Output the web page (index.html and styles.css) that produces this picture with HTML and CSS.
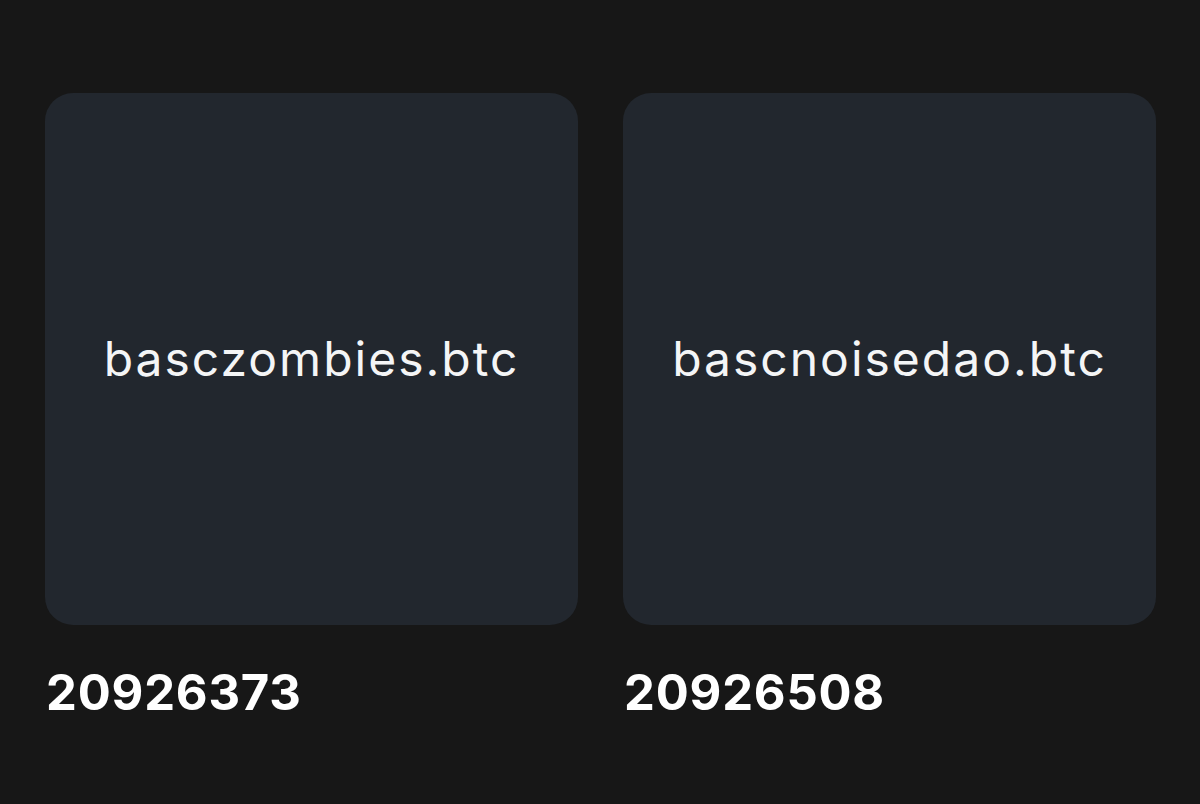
FILE: index.html
```html
<!DOCTYPE html>
<html>
<head>
<meta charset="utf-8">
<link rel="stylesheet" href="styles.css">
</head>
<body>
<div class="grid">
  <div class="item">
    <div class="card"><span class="name">basczombies.btc</span></div>
    <div class="num">20926373</div>
  </div>
  <div class="item">
    <div class="card"><span class="name">bascnoisedao.btc</span></div>
    <div class="num">20926508</div>
  </div>
</div>
</body>
</html>
```
FILE: styles.css
```css
html, body {
  margin: 0;
  padding: 0;
  background: #171717;
  height: 100%;
}
body {
  font-family: Inter, "Noto Sans", sans-serif;
  color: #ffffff;
}
.grid {
  display: grid;
  grid-template-columns: 533px 533px;
  column-gap: 45px;
  padding: 93px 0 0 45px;
}
.item {
  display: flex;
  flex-direction: column;
}
.card {
  height: 532px;
  border-radius: 28px;
  background: #22272e;
  display: flex;
  align-items: center;
  justify-content: center;
}
.name {
  font-size: 48px;
  font-weight: 400;
  letter-spacing: 2px;
  line-height: 56px;
  color: #f4f5f6;
}
.num {
  margin-top: 40px;
  margin-left: 1px;
  font-size: 49px;
  font-weight: 700;
  letter-spacing: 0.8px;
  line-height: 56px;
  color: #ffffff;
}
```
